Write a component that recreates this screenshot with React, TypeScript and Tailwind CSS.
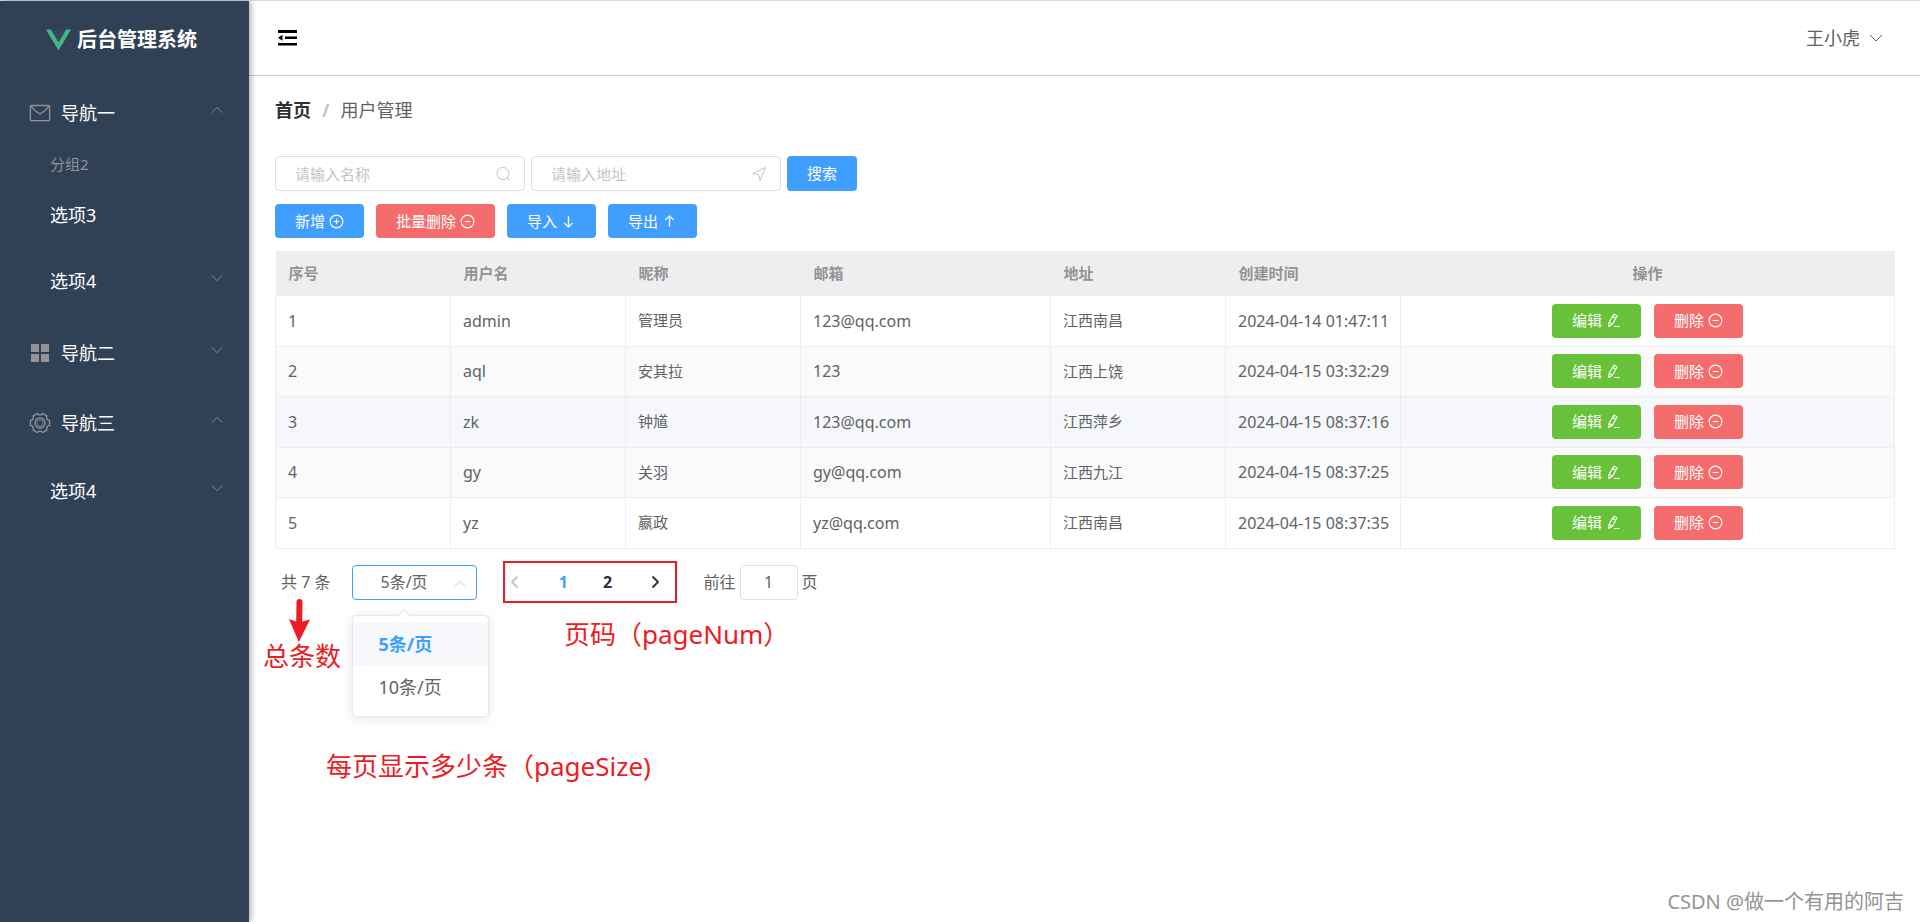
import { useState } from 'react';
import type { ReactNode, SVGProps } from 'react';

interface User {
  id: number;
  username: string;
  nickname: string;
  email: string;
  address: string;
  createTime: string;
}

const users: User[] = [
  { id: 1, username: 'admin', nickname: '管理员', email: '123@qq.com', address: '江西南昌', createTime: '2024-04-14 01:47:11' },
  { id: 2, username: 'aql', nickname: '安其拉', email: '123', address: '江西上饶', createTime: '2024-04-15 03:32:29' },
  { id: 3, username: 'zk', nickname: '钟馗', email: '123@qq.com', address: '江西萍乡', createTime: '2024-04-15 08:37:16' },
  { id: 4, username: 'gy', nickname: '关羽', email: 'gy@qq.com', address: '江西九江', createTime: '2024-04-15 08:37:25' },
  { id: 5, username: 'yz', nickname: '嬴政', email: 'yz@qq.com', address: '江西南昌', createTime: '2024-04-15 08:37:35' },
];

function Icon({ children, ...props }: SVGProps<SVGSVGElement>) {
  return (
    <svg viewBox="0 0 16 16" fill="none" stroke="currentColor" strokeLinejoin="round" aria-hidden="true" {...props}>
      {children}
    </svg>
  );
}

const Chevron = ({ className }: { className: string }) => (
  <Icon className={className}>
    <path d="M2 5l6 6 6-6" />
  </Icon>
);

const CirclePlus = () => (
  <Icon className="size-[15px]" strokeWidth="1.2">
    <circle cx="8" cy="8" r="6.8" />
    <path d="M8 5v6M5 8h6" />
  </Icon>
);

const CircleMinus = () => (
  <Icon className="size-[15px]" strokeWidth="1.2">
    <circle cx="8" cy="8" r="6.8" />
    <path d="M5 8h6" />
  </Icon>
);

const Pen = () => (
  <Icon className="size-[15px]" strokeWidth="1.2">
    <path d="M8.6 1.2l3.2 1.9-5 8.900-3.900 2.300.3-4.500zM7.200 3.700l3.200 1.900M3.200 9.800l3.400 2.100M8.500 14.400h6" />
  </Icon>
);

const buttonColors = {
  primary: 'bg-[#409eff]',
  success: 'bg-[#67c23a]',
  danger: 'bg-[#f56c6c]',
};

function Button({ type, icon, children }: { type: keyof typeof buttonColors; icon?: ReactNode; children: ReactNode }) {
  return (
    <button className={`inline-flex min-h-[34px] items-center gap-1 rounded px-5 text-[15px] text-white ${buttonColors[type]}`}>
      {children}
      {icon}
    </button>
  );
}

function SearchInput({ label, icon }: { label: string; icon: ReactNode }) {
  return (
    <label className="relative block w-[250px] text-[#c0c4cc]">
      <input
        type="text"
        aria-label={label}
        placeholder={label}
        className="h-[35px] w-full rounded border border-[#dcdfe6] pr-9 pl-[19px] text-[15px] text-[#606266] outline-none placeholder:text-[#c0c4cc]"
      />
      <span className="absolute inset-y-0 right-3.5 flex items-center">{icon}</span>
    </label>
  );
}

function Sidebar() {
  return (
    <aside className="z-10 w-[249px] shrink-0 bg-[#304156] text-white shadow-[2px_0_6px_rgba(0,21,41,0.35)]">
      <div className="flex h-[77px] items-center justify-center gap-1.5 pr-1.5">
        <svg viewBox="0 0 26 22" className="h-[22px] w-[25px]" aria-hidden="true">
          <path d="M0 0h5.2L13 13.4 20.8 0H26L13 22z" fill="#41b883" />
          <path d="M5.2 0H10l3 5.2L16 0h4.8L13 13.4z" fill="#34495e" />
        </svg>
        <b className="text-xl">后台管理系统</b>
      </div>
      <nav className="text-lg">
        <NavTitle
          open
          icon={
            <Icon className="size-[22px]">
              <rect x="1" y="2.5" width="14" height="11" rx="0.8" />
              <path d="M1.5 3c3 3.5 5 5.5 6.5 5.5S11.5 6.5 14.5 3" />
            </Icon>
          }
        >
          导航一
        </NavTitle>
        <div className="flex h-[34px] items-center pl-[50px] text-[15px] text-[#909399]">分组2</div>
        <a href="#option3" className="flex h-[66px] items-center pl-[50px]">选项3</a>
        <div className="mb-1">
          <NavTitle nested>选项4</NavTitle>
        </div>
        <NavTitle
          icon={
            <svg viewBox="0 0 22 22" className="size-[22px]" fill="currentColor" aria-hidden="true">
              <path d="M2 2h8v8H2zM12 2h8v8h-8zM2 12h8v8H2zM12 12h8v8h-8z" />
            </svg>
          }
        >
          导航二
        </NavTitle>
        <NavTitle
          open
          icon={
            <Icon className="size-[22px]">
              <circle cx="8" cy="8" r="3.6" />
              <circle cx="8" cy="8" r="2.3" strokeWidth="0.5" />
              <path d="M15 6.300v3.400l-1.400.6-.9 1.400.3 1.500-3 1.700-1.200-1H7.200l-1.200 1-3-1.700.3-1.500-.9-1.400-1.400-.6V6.300l1.400-.6.9-1.400L3 2.800l3-1.700 1.200 1h1.600l1.200-1 3 1.700-.3 1.500.9 1.400z" />
            </Icon>
          }
        >
          导航三
        </NavTitle>
        <NavTitle nested>选项4</NavTitle>
      </nav>
    </aside>
  );
}

function NavTitle({ icon, open, nested, children }: { icon?: ReactNode; open?: boolean; nested?: boolean; children: ReactNode }) {
  return (
    <button
      aria-expanded={!!open}
      className={`flex w-full items-center gap-2.5 pr-[25px] ${nested ? 'h-[66px] pl-[50px]' : 'h-[70px] pl-[29px]'}`}
    >
      {icon && <span className="text-[#909399]">{icon}</span>}
      {children}
      <Chevron className={`mb-1.5 ml-auto size-3.5 text-[#909399] ${open ? 'rotate-180' : ''}`} />
    </button>
  );
}

function UserTable() {
  return (
    <table className="w-full table-fixed border-collapse text-left text-[15px] [&_td]:border [&_td]:border-[#ebeef5] [&_td]:px-3 [&_th]:px-[13px]">
      <colgroup>
        <col className="w-[175px]" />
        <col className="w-[175px]" />
        <col className="w-[175px]" />
        <col className="w-[250px]" />
        <col className="w-[175px]" />
        <col className="w-[175px]" />
        <col />
      </colgroup>
      <thead>
        <tr className="h-11 bg-[#eee] text-[#909399]">
          <th>序号</th>
          <th>用户名</th>
          <th>昵称</th>
          <th>邮箱</th>
          <th>地址</th>
          <th>创建时间</th>
          <th className="text-center">操作</th>
        </tr>
      </thead>
      <tbody>
        {users.map((user) => (
          <tr key={user.id} className={`odd:h-[51px] even:h-[50px] ${user.id === 3 ? 'bg-[#f5f7fa]' : 'even:bg-[#fafafa]'}`}>
            <td className="text-base">{user.id}</td>
            <td className="text-base">{user.username}</td>
            <td>{user.nickname}</td>
            <td className="text-base">{user.email}</td>
            <td>{user.address}</td>
            <td className="text-base whitespace-nowrap">{user.createTime}</td>
            <td>
              <div className="flex justify-center gap-[13px]">
                <Button type="success" icon={<Pen />}>编辑</Button>
                <Button type="danger" icon={<CircleMinus />}>删除</Button>
              </div>
            </td>
          </tr>
        ))}
      </tbody>
    </table>
  );
}

function PageSizeSelect() {
  const [pageSize, setPageSize] = useState(5);

  return (
    <div className="relative ml-[22px] w-[125px]">
      <select
        aria-label="每页显示多少条"
        value={pageSize}
        onChange={(e) => setPageSize(Number(e.target.value))}
        className="h-[35px] w-full appearance-none rounded border border-[#409eff] bg-white pl-[27px] outline-none"
      >
        <option value={5}>5条/页</option>
        <option value={10}>10条/页</option>
      </select>
      <Chevron className="pointer-events-none absolute top-3 right-2.5 size-3.5 rotate-180 text-[#c0c4cc]" />

      <ul className="absolute top-[50px] left-0 w-[137px] rounded border border-[#e4e7ed] bg-white py-[7px] text-lg shadow-[0_2px_12px_rgba(0,0,0,0.1)]">
        <li className="absolute -top-[5px] left-[46px] size-2.5 rotate-45 border-t border-l border-[#e4e7ed] bg-white" aria-hidden="true" />
        {[5, 10].map((size) => (
          <li
            key={size}
            onClick={() => setPageSize(size)}
            className={`flex h-[43px] items-center px-[25px] ${size === pageSize ? 'bg-[#f5f7fa] font-bold text-[#409eff]' : ''}`}
          >
            {size}条/页
          </li>
        ))}
      </ul>
    </div>
  );
}

function Pagination() {
  return (
    <div className="relative mt-4 flex items-center pl-1.5 text-base">
      <span>共 7 条</span>
      <PageSizeSelect />
      <div className="-my-1 ml-[26px] flex h-[42px] w-[174px] items-center justify-between border-2 border-[#ed1c24] pr-3 pl-0.5 font-bold text-[#303133]">
        <button aria-label="上一页" className="text-[#c0c4cc]">
          <Icon className="size-4" strokeWidth="1.8"><path d="M10.5 2.500L5 8l5.500 5.500" /></Icon>
        </button>
        <button className="text-[#409eff]">1</button>
        <button>2</button>
        <button aria-label="下一页">
          <Icon className="size-4" strokeWidth="1.8"><path d="M5.5 2.500L11 8l-5.500 5.500" /></Icon>
        </button>
      </div>
      <label className="ml-[26px] flex items-center gap-1">
        前往
        <input defaultValue="1" className="h-[35px] w-[58px] rounded border border-[#dcdfe6] text-center outline-none" />
        页
      </label>

      <svg viewBox="0 0 21 43" className="absolute top-[34px] left-3.5 h-[43px] w-[21px]" fill="#ed1c24" aria-hidden="true">
        <path d="M7.500 3a3 3 0 0 1 6 0l-.3 19.500 7.800-2L9.800 43 0 20l7.200 2.500z" />
      </svg>
      <span className="absolute top-[72px] -left-3 text-[26px] text-[#ed1c24]">总条数</span>
      <span className="absolute top-[50px] left-[289px] text-[26px] text-[#ed1c24]">页码（pageNum）</span>
      <span className="absolute top-[182px] left-[51px] text-[26px] text-[#ed1c24]">每页显示多少条（pageSize)</span>
    </div>
  );
}

export default function App() {
  return (
    <div className="relative flex min-h-screen border-t border-[#dcdcdc] bg-white font-['Noto_Sans','Noto_Sans_CJK_SC',sans-serif] text-[#606266]">
      <Sidebar />
      <div className="min-w-0 flex-1">
        <header className="flex h-[75px] items-center justify-between border-b border-[#ccc] pr-9 pl-[29px]">
          <button aria-label="折叠菜单" className="text-black">
            <svg viewBox="0 0 20 18" className="h-[18px] w-5" fill="currentColor" aria-hidden="true">
              <path d="M0 1h19v3H0zM7 7.5h12V10H7zM0 14h19v2.5H0zM0 8.700l4.500-3v6z" />
            </svg>
          </button>
          <button className="flex items-center gap-2 text-lg">
            王小虎
            <Chevron className="size-4" />
          </button>
        </header>
        <main className="pr-[25px] pl-[26px]">
          <div className="flex h-[68px] items-center gap-[11px] text-lg">
            <a href="#home" className="font-bold text-[#303133]">首页</a>
            <span className="font-bold text-[#c0c4cc]">/</span>
            <span>用户管理</span>
          </div>
          <div className="mt-3 flex gap-1.5">
            <SearchInput
              label="请输入名称"
              icon={<Icon className="size-4"><circle cx="8" cy="7.5" r="6" /><path d="M12 12l2.500 2.500" /></Icon>}
            />
            <SearchInput
              label="请输入地址"
              icon={<Icon className="size-4"><path d="M14.5 1.500L1.500 7.500l6 1 1.500 6z" /></Icon>}
            />
            <Button type="primary">搜索</Button>
          </div>
          <div className="my-[13px] flex gap-3">
            <Button type="primary" icon={<CirclePlus />}>新增</Button>
            <Button type="danger" icon={<CircleMinus />}>批量删除</Button>
            <Button type="primary" icon={<Icon className="size-[15px]" strokeWidth="1.4"><path d="M8 2.500V14M3.500 9.500L8 14l4.500-4.500" /></Icon>}>导入</Button>
            <Button type="primary" icon={<Icon className="size-[15px]" strokeWidth="1.4"><path d="M8 13.500V2M3.500 6.500L8 2l4.500 4.500" /></Icon>}>导出</Button>
          </div>
          <UserTable />
          <Pagination />
        </main>
      </div>
      <div className="absolute right-4 bottom-1.5 text-xl text-[#949494]">CSDN @做一个有用的阿吉</div>
    </div>
  );
}
